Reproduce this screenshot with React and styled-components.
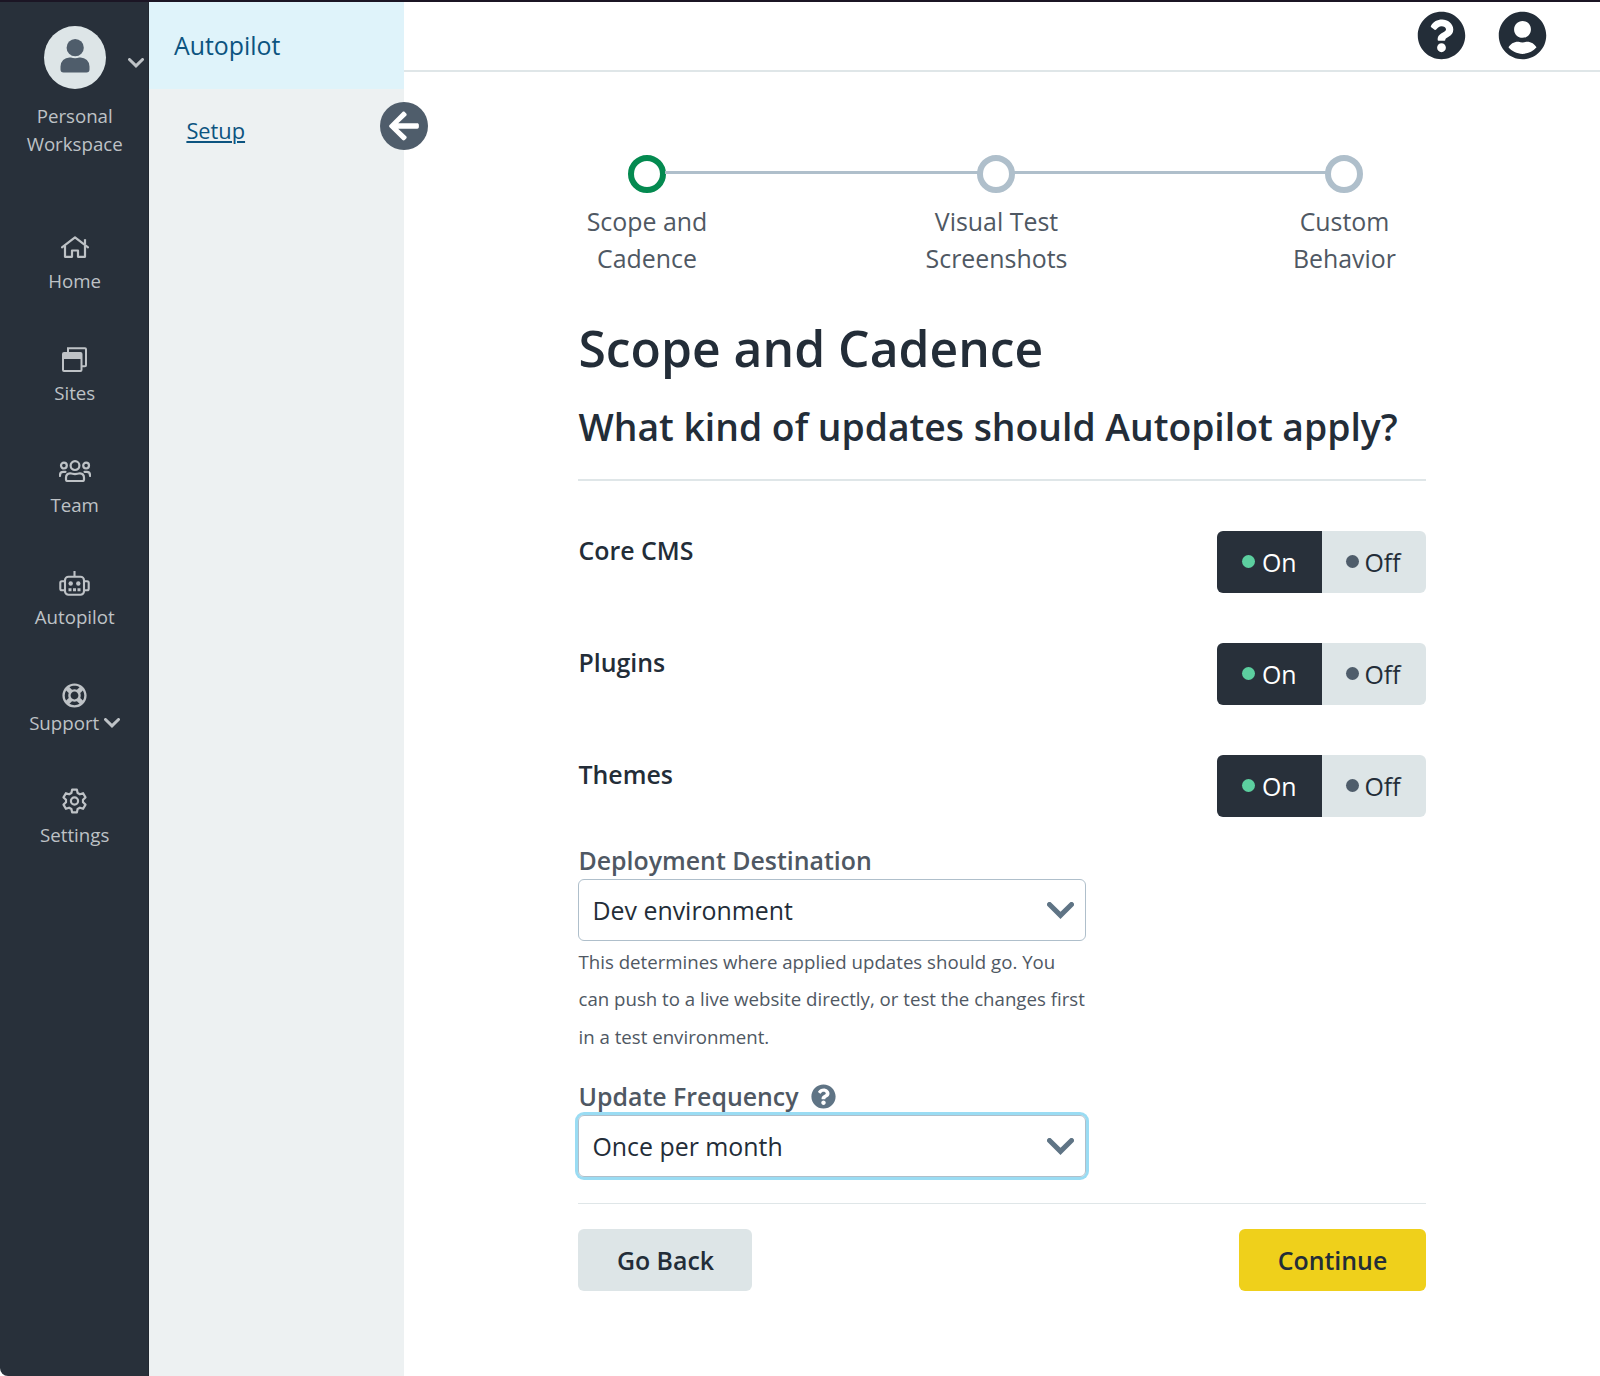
import React, { useState } from "react";
import styled, { createGlobalStyle, css } from "styled-components";
import {
  FaArrowLeft,
  FaQuestionCircle,
  FaRegLifeRing,
  FaUserCircle,
} from "react-icons/fa";

const color = {
  ink: "#28303a",
  text: "#232d38",
  muted: "#4f5863",
  slate: "#4f5d6b",
  steel: "#5f7485",
  line: "#dfe6e8",
  fog: "#dde5e7",
  outline: "#afbfcb",
  nav: "#bec2c6",
  link: "#0c5480",
};

const GlobalStyle = createGlobalStyle`
  *, *::before, *::after { box-sizing: border-box; }
  body {
    margin: 0;
    background: #fff;
    font-family: "Open Sans", "Noto Sans", sans-serif;
    font-size: 24.9px;
    color: ${color.text};
  }
  button { font: inherit; color: inherit; border: 0; padding: 0; cursor: pointer; }
  h1, h2, p { margin: 0; }
  svg { display: block; flex: none; }
`;

const Page = styled.div`
  display: flex;
  height: 1376px;
  overflow: hidden;
  border-top: 2px solid #1b1524;
`;

/* Primary navigation */

const Sidebar = styled.nav`
  flex: none;
  width: 149.4px;
  padding: 24px 0 0 1px;
  background: ${color.ink};
  border-right: 1px solid #222831;
  border-bottom-left-radius: 8px;
  color: ${color.nav};
  font-size: 18.7px;
  line-height: 28px;
  text-align: center;
`;

const WorkspaceButton = styled.div`
  display: grid;
  grid-template-columns: 1fr 62px 1fr;
  align-items: center;
`;

const Avatar = styled.div`
  grid-column: 2;
  display: grid;
  place-items: center;
  height: 63px;
  padding-bottom: 4px;
  border-radius: 50%;
  background: ${color.fog};
  color: ${color.slate};
`;

const WorkspaceCaret = styled.div`
  padding: 10px 0 0 22px;
`;

const WorkspaceName = styled.div`
  margin: 13px auto 0;
  width: 110px;
`;

const NavList = styled.div`
  display: flex;
  flex-direction: column;
  margin-top: 72px;
`;

const NavItem = styled.a`
  display: flex;
  flex-direction: column;
  align-items: center;
  height: ${(p) => (p.$compact ? "106px" : "112px")};
  padding-top: ${(p) => (p.$compact ? "3.5px" : "0")};
`;

const NavIcon = styled.span`
  display: grid;
  place-items: center;
  height: ${(p) => (p.$compact ? "28px" : "34px")};
  margin-bottom: ${(p) => (p.$compact ? "-1px" : "3px")};
`;

const NavLabel = styled.span`
  display: flex;
  align-items: center;
  gap: 5px;
`;

/* Secondary panel */

const Panel = styled.aside`
  position: relative;
  flex: none;
  width: 254.6px;
  background: #edf1f2;
  color: ${color.link};
`;

const PanelTitle = styled.div`
  height: 87px;
  padding: 26px 24.5px 0;
  line-height: 34px;
  background: #dff3fa;
`;

const PanelLink = styled.a`
  display: block;
  padding: 25px 37px 0;
  font-size: 21.8px;
  line-height: 34px;
  text-decoration: underline;
  text-decoration-thickness: 1.5px;
  text-underline-offset: 2px;
`;

const CollapseButton = styled.button`
  position: absolute;
  top: 99.5px;
  right: -24.5px;
  display: grid;
  place-items: center;
  width: 48.5px;
  height: 48.5px;
  border-radius: 50%;
  background: ${color.slate};
  color: #fff;
`;

/* Main area */

const Main = styled.main`
  flex: 1;
  min-width: 0;
`;

const TopBar = styled.header`
  display: flex;
  justify-content: flex-end;
  gap: 32px;
  height: 70px;
  padding: 9px 53px 0 0;
  border-bottom: 2px solid ${color.line};
`;

const Content = styled.div`
  display: flex;
  flex-direction: column;
  width: 847.5px;
  margin-left: 174.5px;
  padding-top: 83px;
`;

const Stepper = styled.ol`
  display: grid;
  grid-template-columns: 137px 562px 134px;
  margin: 0;
  padding: 0;
  list-style: none;
`;

const Step = styled.li`
  position: relative;
  display: flex;
  flex-direction: column;
  align-items: center;
  color: ${color.muted};
  line-height: 37.3px;
  text-align: center;
`;

const StepDot = styled.span`
  width: 38px;
  height: 38px;
  margin-bottom: 10px;
  border: 6px solid ${(p) => (p.$active ? "#048a50" : color.outline)};
  border-radius: 50%;
`;

const StepLine = styled.span`
  position: absolute;
  top: 16px;
  left: calc(50% + 18px);
  width: 314px;
  height: 3px;
  background: ${color.outline};
`;

const Title = styled.h1`
  margin-top: 39px;
  font-size: 49.8px;
  font-weight: 600;
  line-height: 62px;
`;

const Subtitle = styled.h2`
  margin-top: 24px;
  font-size: 37.3px;
  font-weight: 600;
  line-height: 48px;
  white-space: nowrap;
`;

const Rule = styled.hr`
  width: 100%;
  height: ${(p) => p.$height}px;
  margin: ${(p) => p.$gap}px 0 0;
  border: 0;
  background: ${color.line};
`;

const ToggleList = styled.div`
  display: flex;
  flex-direction: column;
  gap: 50px;
  margin-top: 50px;
`;

const ToggleRow = styled.div`
  display: flex;
  justify-content: space-between;
  height: 62px;
`;

const ToggleLabel = styled.span`
  font-weight: 600;
  line-height: 38px;
`;

const Toggle = styled.div`
  display: grid;
  grid-template-columns: 104.5px 104px;
  border-radius: 6px;
  overflow: hidden;
`;

const ToggleOption = styled.button`
  display: flex;
  align-items: center;
  gap: 6.5px;
  padding-left: 25px;
  background: ${(p) => (p.$on ? color.ink : color.fog)};
  color: ${(p) => (p.$on ? "#fff" : color.text)};

  &:last-child {
    gap: 5.5px;
    padding-left: 24px;
  }
`;

const StatusDot = styled.span`
  width: 13px;
  height: 13px;
  border-radius: 50%;
  background: ${(p) => (p.$on ? "#5ccf9f" : color.slate)};
`;

const Field = styled.div`
  width: 508px;
  margin-top: ${(p) => p.$gap}px;
`;

const FieldLabel = styled.div`
  display: flex;
  align-items: center;
  gap: 12px;
  height: 37px;
  color: ${color.muted};
  font-weight: 600;
  line-height: 37px;
`;

const HelpIcon = styled.span`
  color: ${color.steel};
`;

const SelectBox = styled.div`
  display: flex;
  align-items: center;
  justify-content: space-between;
  height: 62px;
  padding: 0 11px 0 13px;
  border: 1.5px solid ${color.outline};
  border-radius: 6px;
  color: ${color.text};
  ${(p) => p.$focused && css`box-shadow: 0 0 0 3px #9adcf3;`}
`;

const SelectCaret = styled.span`
  padding-top: 1px;
  color: ${color.steel};
`;

const HelpText = styled.p`
  margin: 2px 0 1px;
  color: ${color.muted};
  font-size: 18.67px;
  line-height: 37.3px;
  white-space: nowrap;
`;

const Actions = styled.div`
  display: flex;
  justify-content: space-between;
  margin-top: 24.5px;
`;

const ActionButton = styled.button`
  width: ${(p) => (p.$primary ? 187 : 174)}px;
  height: 62px;
  border-radius: 6px;
  background: ${(p) => (p.$primary ? "#efd01b" : color.fog)};
  font-weight: 600;
`;

/* Icons */

function Chevron({ width, height, stroke }) {
  const s = stroke / 2;
  return (
    <svg width={width} height={height} viewBox={`0 0 ${width} ${height}`} fill="none" stroke="currentColor" strokeWidth={stroke} strokeLinecap="round">
      <path d={`M${s} ${s} L${width / 2} ${height - stroke * 0.72} L${width - s} ${s}`} />
    </svg>
  );
}

const PersonIcon = () => (
  <svg width="30" height="34" viewBox="0 0 30 34" fill="currentColor">
    <circle cx="15.2" cy="8.7" r="8.6" />
    <path d="M9.5 18.4h1.4c2.7 1.1 5.7 1.1 8.4 0h1.2a9 9 0 0 1 9 9v3.2a3 3 0 0 1-3 3H3.5a3 3 0 0 1-3-3v-3.2a9 9 0 0 1 9-9z" />
  </svg>
);

const HomeIcon = () => (
  <svg width="28" height="22" viewBox="0 0 28 22" fill="none" stroke="currentColor" strokeWidth="2.2">
    <path d="M1 11.3 L14 1.3 L27 11.3" strokeLinecap="round" strokeLinejoin="round" />
    <path d="M4 10v10.8h7v-6.3h6v6.3h7V10" strokeLinejoin="round" />
    <path d="M24 8V3.2" />
  </svg>
);

const SitesIcon = () => (
  <svg width="25" height="25" viewBox="0 0 25 25" fill="none" stroke="currentColor" strokeWidth="2">
    <path d="M6 5V1.2h17a1 1 0 0 1 1 1v16a1 1 0 0 1-1 1h-3" />
    <rect x="1" y="6" width="18.5" height="18" rx="1" />
    <path d="M1 6h18.5v6H1z" fill="currentColor" stroke="none" />
  </svg>
);

const TeamIcon = () => (
  <svg width="32" height="22" viewBox="0 0 32 22" fill="none" stroke="currentColor" strokeWidth="2.2">
    <circle cx="16" cy="5.6" r="4.4" />
    <circle cx="4.9" cy="5.6" r="2.9" />
    <circle cx="27.1" cy="5.6" r="2.9" />
    <path d="M11 13.3c3.3 1 6.7 1 10 0 2.5.2 4 2.1 4 4.5v1.7c0 .8-.6 1.5-1.5 1.5h-15c-.9 0-1.5-.7-1.5-1.5v-1.700c0-2.400 1.500-4.300 4-4.500z" />
    <path d="M1 16v-.8c0-2 1.3-3.4 3.2-3.4h2.3M31 16v-.8c0-2-1.3-3.4-3.2-3.4h-2.3" strokeLinecap="round" />
  </svg>
);

const RobotIcon = () => (
  <svg width="31" height="25" viewBox="0 0 31 25" fill="none" stroke="currentColor" strokeWidth="2.1">
    <path d="M15.5 0v6" />
    <rect x="6" y="5.8" width="19" height="18" rx="3.5" />
    <path d="M6 10.2H2.8c-.9 0-1.5.6-1.5 1.5v6c0 .9.6 1.5 1.5 1.5H6M25 10.2h3.2c.9 0 1.5.6 1.5 1.5v6c0 .9-.6 1.5-1.5 1.5H25" />
    <g fill="currentColor" stroke="none">
      <circle cx="11.7" cy="12.5" r="2.2" />
      <circle cx="19.3" cy="12.5" r="2.2" />
      <path d="M9.5 17.3h3v3h-3zM14 17.3h3v3h-3zM18.5 17.3h3v3h-3z" />
    </g>
  </svg>
);

const GearIcon = () => (
  <svg width="25" height="26" viewBox="0 0 25 26" fill="none" stroke="currentColor" strokeWidth="2.2" strokeLinejoin="round">
    <circle cx="12.5" cy="13" r="3.6" />
    <path d="M10.1 1.7h4.8l.7 3.3 2.3 1.3 3.2-1.1 2.4 4.2-2.5 2.3v2.6l2.5 2.3-2.4 4.2-3.2-1.1-2.3 1.3-.7 3.3h-4.8L9.4 21l-2.3-1.3-3.2 1.1-2.4-4.2L4 14.3v-2.6L1.5 9.4l2.4-4.2 3.2 1.1L9.4 5z" />
  </svg>
);

const navItems = [
  { label: "Home", icon: <HomeIcon /> },
  { label: "Sites", icon: <SitesIcon /> },
  { label: "Team", icon: <TeamIcon /> },
  { label: "Autopilot", icon: <RobotIcon /> },
  { label: "Support", icon: <FaRegLifeRing size={25} />, expandable: true },
  { label: "Settings", icon: <GearIcon /> },
];

const steps = [
  { lines: ["Scope and", "Cadence"], active: true, line: true },
  { lines: ["Visual Test", "Screenshots"], line: true },
  { lines: ["Custom", "Behavior"] },
];

function UpdateToggle({ label }) {
  const [on, setOn] = useState(true);
  return (
    <ToggleRow>
      <ToggleLabel>{label}</ToggleLabel>
      <Toggle>
        <ToggleOption $on={on} onClick={() => setOn(true)}>
          <StatusDot $on={on} />
          On
        </ToggleOption>
        <ToggleOption $on={!on} onClick={() => setOn(false)}>
          <StatusDot $on={!on} />
          Off
        </ToggleOption>
      </Toggle>
    </ToggleRow>
  );
}

function Select({ value, focused }) {
  return (
    <SelectBox $focused={focused}>
      {value}
      <SelectCaret>
        <Chevron width={27} height={17} stroke={5} />
      </SelectCaret>
    </SelectBox>
  );
}

export default function App() {
  return (
    <>
      <GlobalStyle />
      <Page>
        <Sidebar>
          <WorkspaceButton>
            <Avatar>
              <PersonIcon />
            </Avatar>
            <WorkspaceCaret>
              <Chevron width={16} height={10} stroke={3} />
            </WorkspaceCaret>
          </WorkspaceButton>
          <WorkspaceName>Personal Workspace</WorkspaceName>
          <NavList>
            {navItems.map(({ label, icon, expandable }) => (
              <NavItem key={label} $compact={expandable}>
                <NavIcon $compact={expandable}>{icon}</NavIcon>
                <NavLabel>
                  {label}
                  {expandable && <Chevron width={16} height={10} stroke={3} />}
                </NavLabel>
              </NavItem>
            ))}
          </NavList>
        </Sidebar>

        <Panel>
          <PanelTitle>Autopilot</PanelTitle>
          <PanelLink>Setup</PanelLink>
          <CollapseButton aria-label="Collapse">
            <FaArrowLeft size={34} />
          </CollapseButton>
        </Panel>

        <Main>
          <TopBar>
            <FaQuestionCircle size={49} />
            <FaUserCircle size={49} />
          </TopBar>
          <Content>
            <Stepper>
              {steps.map((step) => (
                <Step key={step.lines[0]}>
                  {step.line && <StepLine />}
                  <StepDot $active={step.active} />
                  {step.lines.map((line) => (
                    <span key={line}>{line}</span>
                  ))}
                </Step>
              ))}
            </Stepper>

            <Title>Scope and Cadence</Title>
            <Subtitle>What kind of updates should Autopilot apply?</Subtitle>
            <Rule $height={2} $gap={28.4} />

            <ToggleList>
              <UpdateToggle label="Core CMS" />
              <UpdateToggle label="Plugins" />
              <UpdateToggle label="Themes" />
            </ToggleList>

            <Field $gap={25}>
              <FieldLabel>Deployment Destination</FieldLabel>
              <Select value="Dev environment" />
              <HelpText>
                This determines where applied updates should go. You
                <br />
                can push to a live website directly, or test the changes first
                <br />
                in a test environment.
              </HelpText>
            </Field>

            <Field $gap={22.5}>
              <FieldLabel>
                Update Frequency
                <HelpIcon>
                  <FaQuestionCircle size={25} />
                </HelpIcon>
              </FieldLabel>
              <Select value="Once per month" focused />
            </Field>

            <Rule $height={1.5} $gap={25.5} />
            <Actions>
              <ActionButton>Go Back</ActionButton>
              <ActionButton $primary>Continue</ActionButton>
            </Actions>
          </Content>
        </Main>
      </Page>
    </>
  );
}
